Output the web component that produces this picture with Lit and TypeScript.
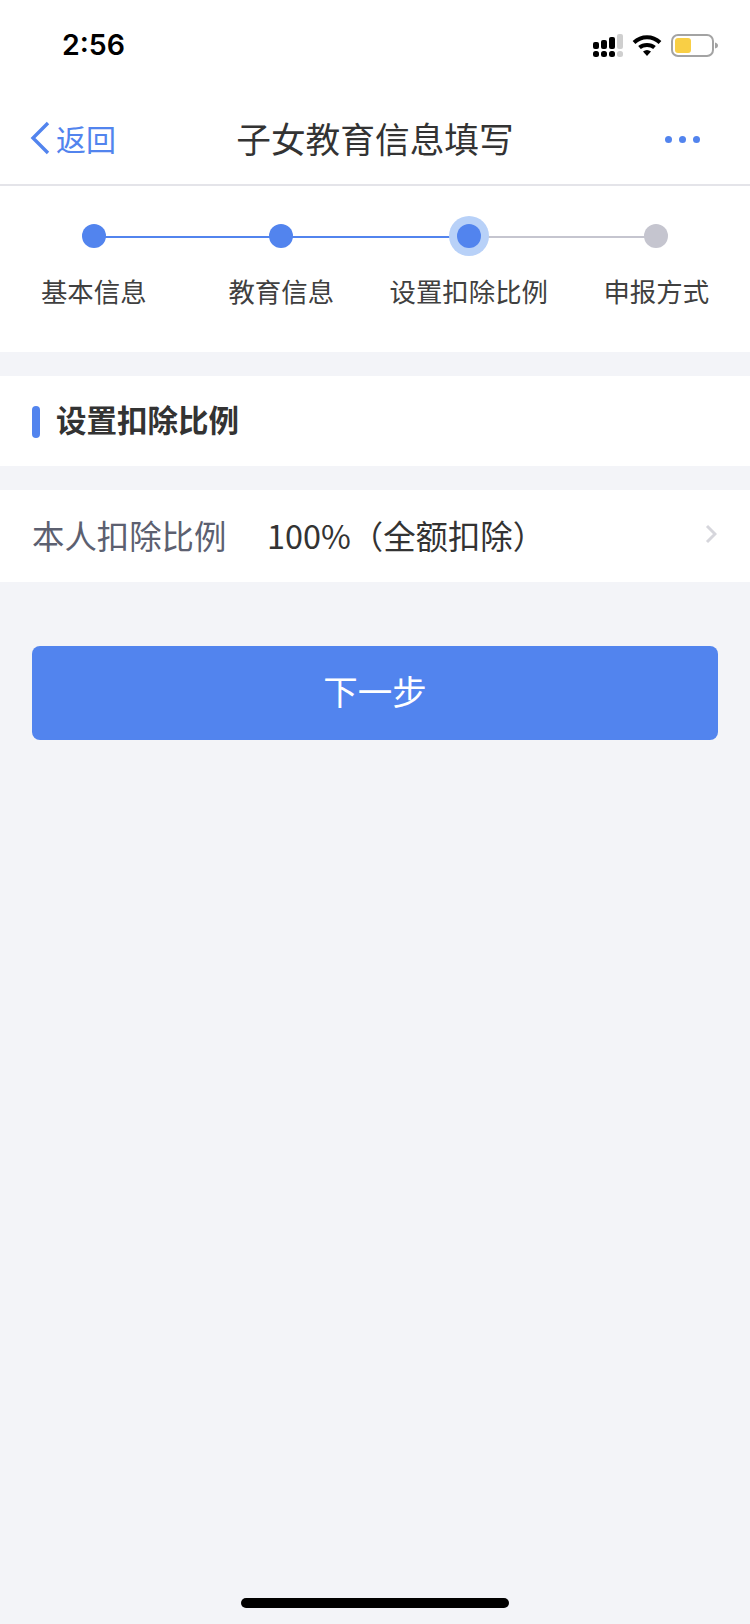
import { LitElement, html, css, svg } from "lit";
import { customElement } from "lit/decorators.js";

const steps = [
  { label: "基本信息", state: "done" },
  { label: "教育信息", state: "done" },
  { label: "设置扣除比例", state: "current" },
  { label: "申报方式", state: "todo" },
];

const signalBars = [
  { x: 0, y: 8, h: 7, c: "#000" },
  { x: 8, y: 6, h: 9, c: "#000" },
  { x: 16, y: 3, h: 12, c: "#000" },
  { x: 24, y: 0, h: 15, c: "#cfcfcf" },
];

@customElement("app-root")
export class AppRoot extends LitElement {
  static styles = css`
    :host {
      display: block;
      width: 750px;
      height: 1624px;
      background: #f3f4f8;
      font-family: "Noto Sans CJK SC", "Noto Sans", sans-serif;
      color: #333;
      overflow: hidden;
    }
    .page { display: flex; flex-direction: column; height: 1624px; }
    .status {
      height: 88px;
      background: #fff;
      display: flex;
      align-items: center;
      padding: 2px 32px 0 62px;
      box-sizing: border-box;
    }
    .time {
      font-family: Inter, "Liberation Sans", sans-serif;
      font-weight: 600;
      font-size: 28.5px;
      line-height: 88px;
      color: #000;
      flex: 1;
    }
    .status-icons { display: flex; align-items: center; gap: 9px; }
    .status-icons svg { display: block; }
    .nav {
      height: 98px;
      box-sizing: border-box;
      border-bottom: 2px solid #e4e4e9;
      background: #fff;
      display: grid;
      grid-template-columns: 180px 1fr 180px;
      align-items: center;
      padding: 5px 0 0 30px;
    }
    .back { display: flex; align-items: center; gap: 6px; color: #5284ee; font-size: 30px; line-height: 40px; margin-top: -2px; }
    .back svg { display: block; }
    .title { text-align: center; font-size: 34.7px; line-height: 48px; color: #333; margin: -2px 0 0 -30px; }
    .more { display: flex; justify-content: flex-end; padding-right: 50px; gap: 7px; margin-top: 1px; }
    .more span { width: 7px; height: 7px; border-radius: 50%; background: #5284ee; }
    .steps {
      background: #fff;
      height: 166px;
      display: grid;
      grid-template-columns: repeat(4, 1fr);
      margin-bottom: 24px;
    }
    .step { display: flex; flex-direction: column; align-items: center; position: relative; padding-top: 38px; }
    .dot {
      width: 24px;
      height: 24px;
      border-radius: 50%;
      background: #5284ee;
      position: relative;
      z-index: 1;
    }
    .dot.current { box-shadow: 0 0 0 8px #b8d1f8; }
    .dot.todo { background: #c5c5cf; }
    .link {
      position: absolute;
      top: 50px;
      left: 50%;
      width: 100%;
      height: 2px;
      background: #5284ee;
    }
    .link.todo { background: #c5c5cf; }
    .label { margin-top: 24px; font-size: 26.4px; line-height: 38px; color: #404040; white-space: nowrap; }
    .section {
      background: #fff;
      height: 90px;
      display: flex;
      align-items: center;
      gap: 16px;
      padding-left: 32px;
      margin-bottom: 24px;
    }
    .mark { width: 8px; height: 32px; border-radius: 4px; background: #5284ee; margin-top: 1px; }
    .section-title { font-size: 30.5px; font-weight: 700; color: #333; line-height: 42px; margin-top: -4px; }
    .row {
      background: #fff;
      height: 92px;
      display: flex;
      align-items: center;
      padding: 0 33px 0 32px;
    }
    .row-label { width: 235px; font-size: 32.4px; color: #5c6070; line-height: 44px; margin-top: -2px; }
    .row-value { flex: 1; font-size: 32.4px; color: #333; line-height: 44px; margin-top: -2px; }
    .row svg { display: block; margin-top: -4px; }
    .btn {
      margin: 64px 32px 0;
      height: 94px;
      box-sizing: border-box;
      padding-bottom: 6px;
      border-radius: 8px;
      background: #5284ee;
      color: #fff;
      font-size: 34.5px;
      display: flex;
      align-items: center;
      justify-content: center;
    }
    .spacer { flex: 1; }
    .home {
      align-self: center;
      width: 268px;
      height: 10px;
      border-radius: 5px;
      background: #000;
      margin-bottom: 16px;
    }
  `;

  render() {
    return html`
      <div class="page">
        <div class="status">
          <div class="time">2:56</div>
          <div class="status-icons">
            <svg width="30" height="23" viewBox="0 0 30 23">
              ${signalBars.map(
                (b) => svg`
                  <rect x=${b.x} y=${b.y} width="6" height=${b.h} rx="2" fill=${b.c}></rect>
                  <rect x=${b.x} y="17" width="6" height="6" rx="2.5" fill=${b.c}></rect>`
              )}
            </svg>
            <svg width="30" height="22" viewBox="0 0 30 22">
              <path d="M2 8.5C9.5 1.5 20.5 1.5 28 8.5" fill="none" stroke="#000" stroke-width="4"></path>
              <path d="M7.5 13.5C11.5 10 18.5 10 22.5 13.5" fill="none" stroke="#000" stroke-width="4"></path>
              <path d="M11 17.5Q15 14.5 19 17.5L15 22Z" fill="#000"></path>
            </svg>
            <svg width="47" height="23" viewBox="0 0 47 23">
              <rect x="1" y="1" width="41" height="21" rx="6" fill="#fff" stroke="#a3a3a3" stroke-width="2"></rect>
              <rect x="4" y="4" width="16" height="15" rx="3" fill="#f9cf45"></rect>
              <path d="M44 8.5C46 9 47 10 47 11.5S46 14 44 14.5Z" fill="#a3a3a3"></path>
            </svg>
          </div>
        </div>

        <div class="nav">
          <div class="back">
            <svg width="20" height="34" viewBox="0 0 20 34">
              <path d="M18 2L3 17L18 32" fill="none" stroke="#5284ee" stroke-width="3.4"></path>
            </svg>
            <span>返回</span>
          </div>
          <div class="title">子女教育信息填写</div>
          <div class="more"><span></span><span></span><span></span></div>
        </div>

        <div class="steps">
          ${steps.map(
            (s, i) => html`
              <div class="step">
                ${i < steps.length - 1
                  ? html`<div class="link ${steps[i + 1].state === "todo" ? "todo" : ""}"></div>`
                  : ""}
                <div class="dot ${s.state}"></div>
                <div class="label">${s.label}</div>
              </div>
            `
          )}
        </div>

        <div class="section">
          <div class="mark"></div>
          <div class="section-title">设置扣除比例</div>
        </div>

        <div class="row">
          <div class="row-label">本人扣除比例</div>
          <div class="row-value">100%（全额扣除）</div>
          <svg width="12" height="20" viewBox="0 0 12 20">
            <path d="M2 2L10 10L2 18" fill="none" stroke="#d6d6dc" stroke-width="3"></path>
          </svg>
        </div>

        <div class="btn">下一步</div>
        <div class="spacer"></div>
        <div class="home"></div>
      </div>
    `;
  }
}
